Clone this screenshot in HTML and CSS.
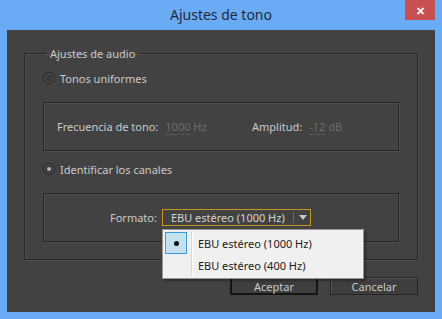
FILE: index.html
```html
<!DOCTYPE html>
<html lang="es">
<head>
    <meta charset="UTF-8">
    <title>Ajustes de tono</title>
    <link rel="stylesheet" href="styles.css">
</head>
<body>
    <div class="window">
        <!-- Title bar -->
        <div class="titlebar">
            <span class="title">Ajustes de tono</span>
            <span class="close">&#x2715;</span>
        </div>

        <div class="client">
            <fieldset class="group">
                <legend>Ajustes de audio</legend>

                <div class="radio-row">
                    <span class="radio"></span>
                    <span>Tonos uniformes</span>
                </div>

                <div class="box box-tone">
                    <div class="field field-first">
                        <span class="label">Frecuencia de tono:</span>
                        <span class="value"><u>1000</u> Hz</span>
                    </div>
                    <div class="field">
                        <span class="label">Amplitud:</span>
                        <span class="value"><u>-12</u> dB</span>
                    </div>
                </div>

                <div class="radio-row">
                    <span class="radio checked"></span>
                    <span>Identificar los canales</span>
                </div>

                <div class="box box-format">
                    <span class="label">Formato:</span>
                    <div class="select">
                        <span class="select-text">EBU estéreo (1000 Hz)</span>
                        <span class="select-arrow"></span>

                        <!-- Open dropdown -->
                        <ul class="menu">
                            <li class="selected"><span class="check"></span>EBU estéreo (1000 Hz)</li>
                            <li><span class="check"></span>EBU estéreo (400 Hz)</li>
                        </ul>
                    </div>
                </div>
            </fieldset>

            <div class="buttons">
                <button class="default">Aceptar</button>
                <button>Cancelar</button>
            </div>
        </div>
    </div>
</body>
</html>
```

FILE: styles.css
```css
* {
    box-sizing: border-box;
}

body {
    margin: 0;
    background: #6aabf5;
    font-family: "Noto Sans", sans-serif;
    font-size: 11px;
}

.window {
    width: 442px;
    height: 319px;
    padding: 0 7px 7px 7px;
}

.titlebar {
    position: relative;
    height: 30px;
    display: flex;
    align-items: center;
    justify-content: center;
}

.title {
    font-size: 14px;
    color: #1f2a36;
    margin-top: -1px;
}

.close {
    position: absolute;
    top: 0;
    right: 0;
    width: 30px;
    height: 20px;
    background: #c75050;
    color: #fff;
    font-size: 11px;
    font-weight: bold;
    display: flex;
    align-items: center;
    justify-content: center;
}

.client {
    height: 282px;
    background: #424242;
    padding: 16px 17px 0 17px;
    color: #c9c9c9;
}

.group {
    margin: 0;
    padding: 0 18px 17px 18px;
    border: 1px solid #282828;
    box-shadow: inset 1px 1px 0 #4e4e4e, 1px 1px 0 #4e4e4e;
    height: 214px;
}

.group legend {
    margin-left: 3px;
    padding: 0 4px;
    color: #c9c9c9;
}

.radio-row {
    height: 20px;
    display: flex;
    align-items: center;
    gap: 5px;
}

.radio-row:first-of-type {
    margin-top: 7px;
}

.radio {
    width: 12px;
    height: 12px;
    border-radius: 50%;
    border: 1px solid #232323;
    background: #3a3a3a;
    box-shadow: inset 0 0 0 1px #595959;
    position: relative;
}

.radio.checked::after {
    content: "";
    position: absolute;
    left: 3px;
    top: 3px;
    width: 4px;
    height: 4px;
    border-radius: 50%;
    background: #b4b4b4;
}

.box {
    height: 49px;
    border: 1px solid #262626;
    box-shadow: inset 1px 1px 0 #4e4e4e, 1px 1px 0 #4e4e4e;
    display: flex;
    align-items: center;
}

.box-tone {
    margin-top: 14px;
    margin-bottom: 8px;
    padding-left: 13px;
}

.box-format {
    margin-top: 14px;
    padding-left: 66px;
    gap: 5px;
}

.field {
    display: flex;
    gap: 7px;
}

.field-first {
    width: 195px;
}

.value {
    color: #6c6c6c;
}

.value u {
    text-decoration: underline dotted;
    text-underline-offset: 3px;
}

.select {
    position: relative;
    width: 149px;
    height: 17px;
    border: 1px solid #c8961e;
    background: #424242;
    display: flex;
    align-items: center;
    padding-left: 8px;
    color: #d2d2d2;
    white-space: nowrap;
}

.select-text {
    flex: 1;
}

.select-arrow {
    width: 17px;
    height: 11px;
    border-left: 1px solid #6a6a6a;
    position: relative;
}

.select-arrow::after {
    content: "";
    position: absolute;
    left: 5px;
    top: 3px;
    border-left: 4px solid transparent;
    border-right: 4px solid transparent;
    border-top: 5px solid #c8c8c8;
}

.menu {
    position: absolute;
    left: -1px;
    top: 19px;
    width: 202px;
    margin: 0;
    padding: 2px;
    list-style: none;
    background: #f0f0f0;
    border: 1px solid #979797;
    box-shadow: 2px 2px 2px rgba(0, 0, 0, 0.3);
    color: #1a1a1a;
}

.menu li {
    height: 22px;
    display: flex;
    align-items: center;
    position: relative;
}

.check {
    width: 22px;
    height: 22px;
    margin-right: 11px;
    position: relative;
}

.menu::before {
    content: "";
    position: absolute;
    left: 28px;
    top: 2px;
    bottom: 2px;
    width: 1px;
    background: #d7d7d7;
    border-right: 1px solid #fff;
}

.selected .check {
    background: #c4e1f0;
    border: 1px solid #3c9cdb;
}

.selected .check::after {
    content: "";
    position: absolute;
    left: 8px;
    top: 8px;
    width: 5px;
    height: 5px;
    border-radius: 50%;
    background: #111;
}

.buttons {
    display: flex;
    justify-content: flex-end;
    gap: 12px;
    margin-top: 17px;
}

.buttons button {
    width: 88px;
    height: 18px;
    padding: 0;
    font-family: inherit;
    font-size: 11px;
    color: #c9c9c9;
    background: #3e3e3e;
    border: 1px solid #262626;
    box-shadow: inset 1px 1px 0 #555;
}

.buttons button.default {
    border: 2px solid #141414;
    box-shadow: none;
}
```
